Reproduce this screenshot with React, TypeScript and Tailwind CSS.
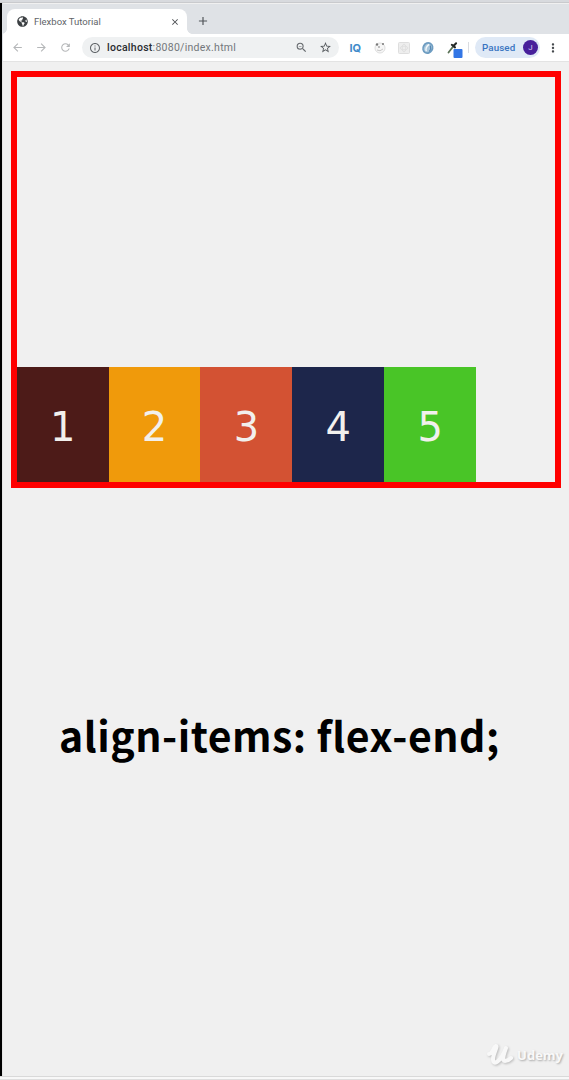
import { FaGlobeAmericas } from 'react-icons/fa';
import { MdArrowBack, MdArrowForward, MdRefresh, MdClose, MdAdd, MdInfoOutline, MdZoomOut, MdStarBorder, MdMoreVert } from 'react-icons/md';

const boxes = [
  { n: 1, cls: 'bg-[#4d1b18]' },
  { n: 2, cls: 'bg-[#f09a0b]' },
  { n: 3, cls: 'bg-[#d35233]' },
  { n: 4, cls: 'bg-[#1d264b]' },
  { n: 5, cls: 'bg-[#49c527]' },
];

function TabStrip() {
  return (
    <div className="flex h-[30px] items-end bg-[#dfe2e6]">
      <div className="relative ml-[4px] flex h-[25px] w-[180px] items-center rounded-t-lg bg-white pl-[10px]">
        <span className="absolute -left-[5px] bottom-0 size-[5px] bg-[radial-gradient(circle_at_0_0,#dfe2e6_4.5px,white_5px)]" />
        <span className="absolute -right-[5px] bottom-0 size-[5px] bg-[radial-gradient(circle_at_100%_0,#dfe2e6_4.5px,white_5px)]" />
        <FaGlobeAmericas className="size-[11px] text-[#3c4043]" />
        <span className="ml-[6px] whitespace-nowrap text-[9.5px] leading-none text-[#606468]">Flexbox Tutorial</span>
        <MdClose className="ml-auto mr-[7px] size-[10px] text-[#45484c]" />
      </div>
      <MdAdd className="mb-[6px] ml-[9px] size-[14px] text-[#505458]" />
    </div>
  );
}

function Extensions() {
  return (
    <svg className="h-6 w-[126px] shrink-0" viewBox="0 0 126 24" fill="none">
      <text x="5.5" y="16" fontSize="11" fontWeight="700" fill="#408bca" fontFamily="Inter, sans-serif" textLength="11.5">IQ</text>
      <circle cx="36" cy="12" r="5" fill="#f6f6f6" stroke="#dedede" />
      <circle cx="33" cy="8.5" r="1.2" fill="#777" />
      <circle cx="39" cy="8" r="1" fill="#777" />
      <circle cx="35" cy="11" r="0.8" fill="#777" />
      <path d="M33 14q3 2 6-1" stroke="#c8c8c8" />
      <rect x="54.5" y="6.5" width="11" height="11" rx="1" fill="#eee" stroke="#dedede" />
      <ellipse cx="60" cy="12" rx="4" ry="1.8" stroke="#e0e0e0" />
      <ellipse cx="60" cy="12" rx="1.8" ry="4" stroke="#e0e0e0" />
      <ellipse cx="83.8" cy="12" rx="4.6" ry="5.2" transform="rotate(30 83.8 12)" fill="#a9c6db" stroke="#6d9cc1" strokeWidth="1.8" />
      <path d="M82.3 15.2q-1.4-3.5 2.8-6.8" stroke="#f3f8fb" strokeWidth="1.4" />
      <path d="M85.2 15.5q2.3-2.5 1-6" stroke="#5588b4" strokeWidth="1.1" />
      <path d="m104.5 16.5 5-6.5" stroke="#5b7358" strokeWidth="1.8" strokeLinecap="round" />
      <path d="m107.8 8.8 3.2 2.6M109.5 10l2.6-2.8" stroke="#252927" strokeWidth="2" strokeLinecap="round" />
      <rect x="109.5" y="13" width="9" height="9" rx="1" fill="#3376e5" />
      <path d="M124.5 6v11" stroke="#dadce0" />
    </svg>
  );
}

function Toolbar() {
  return (
    <div className="flex h-7 items-center border-b border-[#e3e3e3] bg-white">
      <MdArrowBack className="ml-[8px] size-[13px] shrink-0 text-[#b5b7b9]" />
      <MdArrowForward className="ml-[11px] size-[13px] shrink-0 text-[#b5b7b9]" />
      <MdRefresh className="ml-[11px] size-[13px] shrink-0 text-[#b5b7b9]" />
      <div className="ml-[10px] flex h-[21px] w-[257px] shrink-0 items-center rounded-full bg-[#eff1f2] pl-[7px] pr-[7px]">
        <MdInfoOutline className="size-[12px] shrink-0 text-[#62666a]" />
        <span className="ml-[6px] whitespace-nowrap pt-[2px] text-[10.5px] leading-none tracking-[0.27px] text-[#73777b]"><span className="font-medium text-[#292c30]">localhost</span>:8080/index.html</span>
        <MdZoomOut className="ml-auto size-[13px] shrink-0 text-[#666a6e]" />
        <MdStarBorder className="ml-[11px] size-[13px] shrink-0 text-[#55595d]" />
      </div>
      <div className="ml-[5px]"><Extensions /></div>
      <div className="ml-[5px] flex h-[21px] w-[65px] shrink-0 items-center rounded-full bg-[#dfe9f6] pl-[7px]">
        <span className="text-[9.8px] font-medium leading-none tracking-[0.1px] text-[#3974c1]">Paused</span>
        <span className="ml-auto mr-[2px] flex size-[15px] items-center justify-center rounded-full bg-[#47209b] text-[8px] leading-none text-[#d8cdf1]">J</span>
      </div>
      <MdMoreVert className="ml-[6px] size-[14px] shrink-0 text-[#45494d]" />
    </div>
  );
}

function Watermark() {
  return (
    <div className="absolute right-[6px] bottom-[11px] flex items-center">
      <svg className="h-[28px] w-[30px] drop-shadow-[1px_1px_1px_rgba(0,0,0,0.22)]" viewBox="0 0 30 28" fill="none">
        <path d="M3 13C7 13 7 6 10 5c2 0-3 8-3 13 0 8 8 2 13-11-3 8-4 13-1 13 2 0 4-1 6-3" stroke="#f8f8f8" strokeWidth="4" strokeLinecap="round" strokeLinejoin="round" />
      </svg>
      <span className="ml-px font-['Open_Sans',sans-serif] text-[13px] font-bold leading-none text-[#f9f9f9] [text-shadow:1px_1px_2px_rgba(0,0,0,0.3)]">Udemy</span>
    </div>
  );
}

export default function App() {
  return (
    <div className="relative flex h-[1080px] w-[569px] flex-col overflow-hidden bg-[#f0f0f0] font-[Roboto,sans-serif]">
      <div className="h-[3px] shrink-0 border-b border-[#c9cacd] bg-[#d8dade]" />
      <div className="flex h-[1073px] shrink-0 flex-col border-l-2 border-black">
        <div className="flex flex-col border-l border-[#dfe2e6] pt-[1px]">
          <TabStrip />
          <Toolbar />
        </div>
        <main className="flex flex-1 flex-col border-l border-[#e5e5e5]">
          <div className="mt-[9px] ml-[7.7px] flex h-[417px] w-[550.3px] shrink-0 items-end border-[6px] border-[#ff0000] bg-[#f0f0f0]">
            {boxes.map((b) => (
              <div key={b.n} className={`flex h-[115px] w-[91.9px] shrink-0 items-center justify-center pt-[5px] font-['DejaVu_Sans',sans-serif] text-[40px] leading-none text-[#f2f0ed] ${b.cls}`}>{b.n}</div>
            ))}
          </div>
          <p className="mt-[214px] ml-[56px] whitespace-nowrap font-['Noto_Sans_CJK_SC',sans-serif] text-[41px] font-bold leading-[64px] tracking-[0.52px] text-black">align-items: flex-end;</p>
        </main>
      </div>
      <div className="flex h-1 shrink-0 flex-col justify-between border-t border-[#d9d9d9] bg-[#f8f8f8]">
        <div className="mt-[2px] h-px bg-[#dedede]" />
      </div>
      <Watermark />
    </div>
  );
}
